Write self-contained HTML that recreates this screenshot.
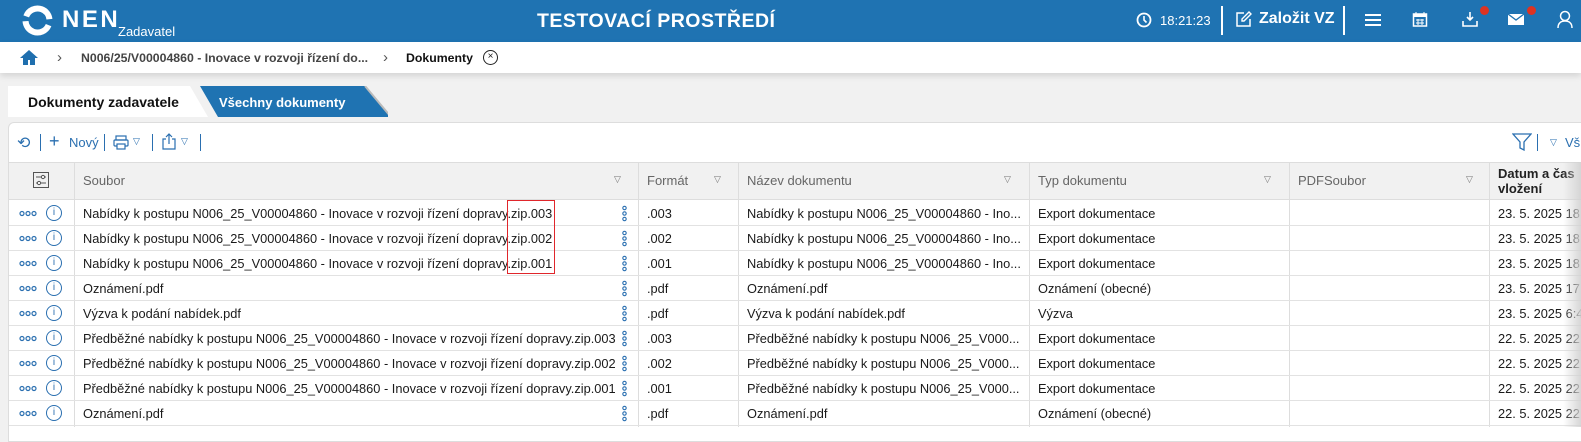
<!DOCTYPE html>
<html><head><meta charset="utf-8"><style>
*{box-sizing:border-box;margin:0;padding:0}
body{width:1581px;height:427px;overflow:hidden;background:#f1f1f1;font-family:"Liberation Sans",Arial,sans-serif;font-size:13px;color:#222;position:relative}
.abs{position:absolute}
#top{left:0;top:0;width:1581px;height:42px;background:#1f73b2;color:#fff}
#bc{left:0;top:42px;width:1581px;height:31px;background:#fff;box-shadow:0 3px 6px rgba(0,0,0,.12)}
.vs{position:absolute;width:2px;background:#fff}
#panel{left:8px;top:122px;width:1600px;height:320px;background:#fff;border:1px solid #ddd;border-radius:6px 0 0 0}
.tb{color:#2a6fb0}
.hdr{top:162px;height:38px;background:#f1f1f1;border-top:1px solid #ddd;border-bottom:1px solid #ddd}
.cl{position:absolute;top:162px;width:1px;height:265px;background:#ddd}
.row{position:absolute;left:9px;width:1572px;height:25px;border-bottom:1px solid #e2e2e2}
.c{position:absolute;top:5px;white-space:nowrap;font-size:12.8px;color:#1a1a1a}
.h{position:absolute;top:11px;color:#666;font-size:13px}
.tri{position:absolute;top:11px;color:#777;font-size:9px}
</style></head><body>
<div id="top" class="abs">
 <svg class="abs" style="left:21px;top:4px" width="33" height="33" viewBox="0 0 33 33"><circle cx="16.5" cy="16.5" r="12" fill="none" stroke="#fff" stroke-width="6" stroke-dasharray="32 6" transform="rotate(200 16.5 16.5)"/></svg>
 <div class="abs" style="left:62px;top:6px;font-size:24px;font-weight:bold;letter-spacing:2.5px">NEN</div>
 <div class="abs" style="left:118px;top:24px;font-size:13px">Zadavatel</div>
 <div class="abs" style="left:537px;top:10px;font-size:19.5px;font-weight:bold;letter-spacing:.5px">TESTOVACÍ PROSTŘEDÍ</div>
 <svg class="abs" style="left:1136px;top:12px" width="16" height="16"><circle cx="8" cy="8" r="6.5" fill="none" stroke="#fff" stroke-width="1.8"/><path d="M8 4v4l2.5 2.5" stroke="#fff" stroke-width="1.6" fill="none"/></svg>
 <div class="abs" style="left:1160px;top:13px;font-size:13px">18:21:23</div>
 <div class="vs" style="left:1221px;top:6px;height:29px"></div>
 <svg class="abs" style="left:1235px;top:11px" width="17" height="17"><path d="M9 2H2v13h13V8" stroke="#fff" stroke-width="1.5" fill="none"/><path d="M14 1l2 2-7 7H7V8z" stroke="#fff" stroke-width="1.4" fill="none"/></svg>
 <div class="abs" style="left:1259px;top:10px;font-size:16px;font-weight:bold">Založit VZ</div>
 <div class="vs" style="left:1343px;top:6px;height:29px"></div>
 <div class="abs" style="left:1365px;top:14px;width:16px;height:2px;background:#fff;box-shadow:0 5px #fff,0 10px #fff"></div>
 <svg class="abs" style="left:1412px;top:11px" width="16" height="17"><rect x="1.5" y="3" width="13" height="12" fill="none" stroke="#fff" stroke-width="1.5"/><rect x="1.5" y="3" width="13" height="3" fill="#fff"/><path d="M4 1v4M12 1v4M4 9h8M4 12h8M6 8v6M10 8v6" stroke="#fff" stroke-width="1"/></svg>
 <svg class="abs" style="left:1461px;top:10px" width="18" height="18"><path d="M9 2v8M6 7l3 3 3-3M2 11v5h14v-5" stroke="#fff" stroke-width="1.6" fill="none"/></svg>
 <div class="abs" style="left:1480px;top:6px;width:9px;height:9px;border-radius:50%;background:#d32"></div>
 <svg class="abs" style="left:1507px;top:13px" width="18" height="13"><rect x="1" y="1" width="16" height="11" fill="#fff"/><path d="M1 1l8 6 8-6" stroke="#1f73b2" stroke-width="1.3" fill="none"/></svg>
 <div class="abs" style="left:1527px;top:6px;width:9px;height:9px;border-radius:50%;background:#d32"></div>
 <svg class="abs" style="left:1557px;top:10px" width="16" height="19"><circle cx="8" cy="6" r="4.5" fill="none" stroke="#fff" stroke-width="1.5"/><path d="M1 18c0-5 3-7 7-7s7 2 7 7" stroke="#fff" stroke-width="1.5" fill="none"/></svg>
</div>
<div id="bc" class="abs">
 <svg class="abs" style="left:19px;top:7px" width="20" height="17"><path d="M10 1L1 9h3v7h5v-5h2v5h5V9h3z" fill="#1f6fae"/></svg>
 <div class="abs" style="left:57px;top:7px;color:#555;font-size:15px">&#x203A;</div>
 <div class="abs" style="left:81px;top:9px;color:#444;font-size:12.3px;font-weight:bold">N006/25/V00004860 - Inovace v rozvoji řízení do...</div>
 <div class="abs" style="left:383px;top:7px;color:#555;font-size:15px">&#x203A;</div>
 <div class="abs" style="left:406px;top:9px;color:#111;font-size:12.3px;font-weight:bold">Dokumenty</div>
 <div class="abs" style="left:483px;top:8px;width:15px;height:15px;border:1.5px solid #222;border-radius:50%;font-size:10px;line-height:12px;text-align:center">×</div>
</div>
<svg class="abs" style="left:8px;top:86px" width="380" height="32"><path d="M0 0H182L200 31H0Z" fill="#fff"/><path d="M192 0H357L383 31H210Z" fill="#1f73b2"/><path d="M357 0l26 31" stroke="#bbb" stroke-width="2"/></svg>
<div class="abs" style="left:28px;top:94px;font-size:14px;font-weight:bold;color:#111">Dokumenty zadavatele</div>
<div class="abs" style="left:219px;top:95px;font-size:13px;font-weight:bold;color:#fff">Všechny dokumenty</div>
<div id="panel" class="abs"></div>
<div class="abs tb" style="left:17px;top:133px;font-size:16px">&#x27F2;</div>
<div class="abs" style="left:40px;top:134px;width:1px;height:17px;background:#2a6fb0"></div>
<div class="abs tb" style="left:49px;top:131px;font-size:18px">+</div>
<div class="abs tb" style="left:69px;top:135px;font-size:13px">Nový</div>
<div class="abs" style="left:104px;top:134px;width:1px;height:17px;background:#2a6fb0"></div>
<svg class="abs" style="left:113px;top:135px" width="16" height="15"><rect x="3" y="1" width="10" height="4" fill="none" stroke="#2a6fb0" stroke-width="1.2"/><rect x="1" y="5" width="14" height="6" rx="1" fill="none" stroke="#2a6fb0" stroke-width="1.2"/><rect x="4" y="9" width="8" height="5" fill="#fff" stroke="#2a6fb0" stroke-width="1.2"/></svg>
<div class="abs tb" style="left:133px;top:136px;font-size:9px">▽</div>
<div class="abs" style="left:152px;top:134px;width:1px;height:17px;background:#2a6fb0"></div>
<svg class="abs" style="left:162px;top:133px" width="14" height="17"><path d="M4 6H1v10h12V6h-3M7 11V1M4 4l3-3 3 3" stroke="#2a6fb0" stroke-width="1.2" fill="none"/></svg>
<div class="abs tb" style="left:181px;top:136px;font-size:9px">▽</div>
<div class="abs" style="left:200px;top:134px;width:1px;height:17px;background:#2a6fb0"></div>
<svg class="abs" style="left:1512px;top:133px" width="20" height="18"><path d="M1 1h18l-7 8v8l-4-2V9z" fill="none" stroke="#2a6fb0" stroke-width="1.3"/></svg>
<div class="abs" style="left:1537px;top:134px;width:1px;height:17px;background:#2a6fb0"></div>
<div class="abs tb" style="left:1550px;top:137px;font-size:9px">▽</div>
<div class="abs tb" style="left:1565px;top:135px;font-size:13px">Vš</div>
<div class="abs hdr" style="left:9px;width:1572px"></div>
<svg class="abs" style="left:33px;top:172px" width="16" height="16"><rect x=".5" y=".5" width="15" height="15" fill="none" stroke="#555"/><path d="M3 5h10M3 11h10" stroke="#555"/><circle cx="10" cy="5" r="1.6" fill="#fff" stroke="#555"/><circle cx="6" cy="11" r="1.6" fill="#fff" stroke="#555"/></svg>
<div class="cl" style="left:74px"></div><div class="cl" style="left:638px"></div><div class="cl" style="left:738px"></div><div class="cl" style="left:1029px"></div><div class="cl" style="left:1289px"></div><div class="cl" style="left:1489px"></div>
<div class="h" style="left:83px;top:173px">Soubor</div><div class="tri" style="left:614px;top:174px">▽</div>
<div class="h" style="left:647px;top:173px">Formát</div><div class="tri" style="left:714px;top:174px">▽</div>
<div class="h" style="left:747px;top:173px">Název dokumentu</div><div class="tri" style="left:1004px;top:174px">▽</div>
<div class="h" style="left:1038px;top:173px">Typ dokumentu</div><div class="tri" style="left:1264px;top:174px">▽</div>
<div class="h" style="left:1298px;top:173px">PDFSoubor</div><div class="tri" style="left:1466px;top:174px">▽</div>
<div class="abs" style="left:1498px;top:166px;font-weight:bold;font-size:13px;line-height:15px;color:#222">Datum a čas<br>vložení</div>
<div id="rows"></div>
<script>
var R=[["Nabídky k postupu N006_25_V00004860 - Inovace v rozvoji řízení dopravy.zip.003",".003","Nabídky k postupu N006_25_V00004860 - Ino...","Export dokumentace","23. 5. 2025 18"],
["Nabídky k postupu N006_25_V00004860 - Inovace v rozvoji řízení dopravy.zip.002",".002","Nabídky k postupu N006_25_V00004860 - Ino...","Export dokumentace","23. 5. 2025 18"],
["Nabídky k postupu N006_25_V00004860 - Inovace v rozvoji řízení dopravy.zip.001",".001","Nabídky k postupu N006_25_V00004860 - Ino...","Export dokumentace","23. 5. 2025 18"],
["Oznámení.pdf",".pdf","Oznámení.pdf","Oznámení (obecné)","23. 5. 2025 17"],
["Výzva k podání nabídek.pdf",".pdf","Výzva k podání nabídek.pdf","Výzva","23. 5. 2025 6:4"],
["Předběžné nabídky k postupu N006_25_V00004860 - Inovace v rozvoji řízení dopravy.zip.003",".003","Předběžné nabídky k postupu N006_25_V000...","Export dokumentace","22. 5. 2025 22"],
["Předběžné nabídky k postupu N006_25_V00004860 - Inovace v rozvoji řízení dopravy.zip.002",".002","Předběžné nabídky k postupu N006_25_V000...","Export dokumentace","22. 5. 2025 22"],
["Předběžné nabídky k postupu N006_25_V00004860 - Inovace v rozvoji řízení dopravy.zip.001",".001","Předběžné nabídky k postupu N006_25_V000...","Export dokumentace","22. 5. 2025 22"],
["Oznámení.pdf",".pdf","Oznámení.pdf","Oznámení (obecné)","22. 5. 2025 22"]];
var h="";R.forEach(function(r,i){var t=201+i*25;
h+='<div class="row" style="top:'+t+'px"></div>'+
'<svg class="abs" style="left:19px;top:'+(t+9)+'px" width="20" height="7"><g fill="none" stroke="#2a6fb0" stroke-width="1.2"><circle cx="3" cy="3.5" r="2"/><circle cx="9" cy="3.5" r="2"/><circle cx="15" cy="3.5" r="2"/></g></svg>'+
'<div class="abs" style="left:46px;top:'+(t+4)+'px;width:16px;height:16px;border:1.3px solid #2a6fb0;border-radius:50%;color:#2a6fb0;font-size:10px;text-align:center;line-height:13px">i</div>'+
'<div class="abs c" style="left:83px;top:'+(t+5)+'px">'+r[0]+'</div>'+
'<svg class="abs" style="left:621px;top:'+(t+4)+'px" width="7" height="18"><g fill="none" stroke="#2a6fb0" stroke-width="1.1"><circle cx="3.5" cy="3" r="1.7"/><circle cx="3.5" cy="8.5" r="1.7"/><circle cx="3.5" cy="14" r="1.7"/></g></svg>'+
'<div class="abs c" style="left:647px;top:'+(t+5)+'px">'+r[1]+'</div>'+
'<div class="abs c" style="left:747px;top:'+(t+5)+'px">'+r[2]+'</div>'+
'<div class="abs c" style="left:1038px;top:'+(t+5)+'px">'+r[3]+'</div>'+
'<div class="abs c" style="left:1498px;top:'+(t+5)+'px">'+r[4]+'</div>';});
document.getElementById("rows").innerHTML=h;
</script>
<div class="abs" style="left:1563px;top:162px;width:18px;height:265px;background:linear-gradient(90deg,rgba(230,230,230,0),rgba(210,210,210,.9))"></div>
<div class="abs" style="left:507px;top:200px;width:48px;height:74px;border:1px solid #e0262b"></div>
</body></html>
